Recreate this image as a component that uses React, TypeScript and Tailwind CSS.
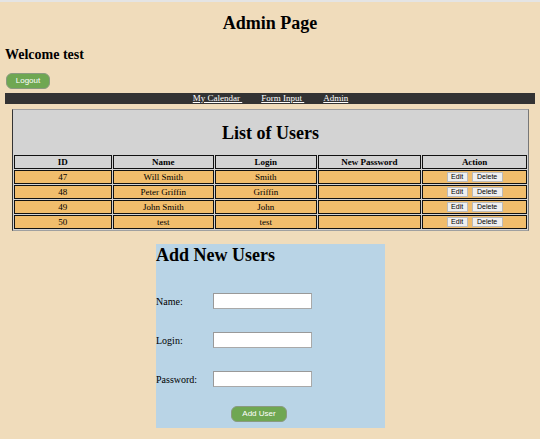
import React from "react";

const rows = [
  { id: 47, name: "Will Smith", login: "Smith" },
  { id: 48, name: "Peter Griffin", login: "Griffin" },
  { id: 49, name: "John Smith", login: "John" },
  { id: 50, name: "test", login: "test" },
];

const serif = "font-['Liberation_Serif',_'Times_New_Roman',_serif]";

export default function App() {
  return (
    <div className={`min-h-[439px] w-[540px] bg-[#f0dcbb] border-t-2 border-[#e4e4e4] text-black ${serif}`}>
      <h2 className="text-center text-[18px] font-bold leading-[21px] pt-[11px]">Admin Page</h2>
      <h3 className="text-[14px] font-bold leading-[16px] mt-[13px] ml-[5px]">Welcome test</h3>
      <button className="ml-[6px] mt-[10px] w-[44px] h-[16px] rounded-[6px] bg-[#6fa752] border border-[#8a9a80] text-white text-[8px] leading-[14px] font-['Liberation_Sans',_Arial,_sans-serif] block">
        Logout
      </button>
      <nav className="mx-[5px] mt-[4px] h-[11px] bg-[#333333] flex justify-center gap-[19px] text-[9px] leading-[11px] pl-[1px]">
        <a className="text-white underline whitespace-pre">My Calendar </a>
        <a className="text-white underline whitespace-pre">Form Input </a>
        <a className="text-white underline whitespace-pre">Admin</a>
      </nav>
      <div className="ml-[12px] mt-[5px] w-[517px] bg-[#d3d3d3] border border-t-[#a0a0a0] border-l-[#333] border-r-[#777] border-b-[#a0a0a0]">
        <div className="h-[45px] flex items-center justify-center text-[18px] font-bold pt-[1px]">List of Users</div>
        <table className="w-full border-separate border-spacing-x-[1.5px] border-spacing-y-[1.5px] text-[9px] leading-[11px] -mt-[1px]">
          <thead>
            <tr>
              {["ID", "Name", "Login", "New Password", "Action"].map((h, i) => (
                <th
                  key={h}
                  className={`border-[1.5px] border-[#111] bg-[#d3d3d3] font-bold h-[14px] p-0 ${
                    ["w-[98px]", "w-[102px]", "w-[102px]", "w-[104px]", "w-[105px]"][i]
                  }`}
                >
                  {h}
                </th>
              ))}
            </tr>
          </thead>
          <tbody>
            {rows.map((r) => (
              <tr key={r.id}>
                <td className="border-[1.5px] border-[#111] bg-[#f1bd6c] text-center h-[14px] p-0">{r.id}</td>
                <td className="border-[1.5px] border-[#111] bg-[#f1bd6c] text-center p-0">{r.name}</td>
                <td className="border-[1.5px] border-[#111] bg-[#f1bd6c] text-center p-0">{r.login}</td>
                <td className="border-[1.5px] border-[#111] bg-[#f1bd6c] p-0"></td>
                <td className="border-[1.5px] border-[#111] bg-[#f1bd6c] p-0">
                  <div className="flex justify-center gap-[4px] font-['Liberation_Sans',_Arial,_sans-serif] text-[7px]">
                    <button className="w-[21px] h-[10px] leading-[8px] bg-[#efefef] border border-[#bbb]">Edit</button>
                    <button className="w-[31px] h-[10px] leading-[8px] bg-[#efefef] border border-[#bbb]">Delete</button>
                  </div>
                </td>
              </tr>
            ))}
          </tbody>
        </table>
      </div>
      <div className="mx-auto mt-[13px] w-[229px] h-[184px] bg-[#b9d4e6] relative left-[0.5px]">
        <h2 className="text-[18px] font-bold leading-[21px] pt-[1px]">Add New Users</h2>
        <div className="mt-[27px] flex flex-col gap-[23px] text-[10px]">
          {["Name:", "Login:", "Password:"].map((l) => (
            <div key={l} className="flex items-center h-[16px]">
              <span className="w-[57px]">{l}</span>
              <input className="w-[99px] h-[16px] bg-white border border-[#a9a9a9] border-t-[#999] border-l-[#999]" />
            </div>
          ))}
        </div>
        <button className="ml-[75px] mt-[19px] w-[56px] h-[16px] rounded-[6px] bg-[#6fa752] border border-[#8a9a80] text-white text-[8px] leading-[14px] font-['Liberation_Sans',_Arial,_sans-serif] block">
          Add User
        </button>
      </div>
    </div>
  );
}
